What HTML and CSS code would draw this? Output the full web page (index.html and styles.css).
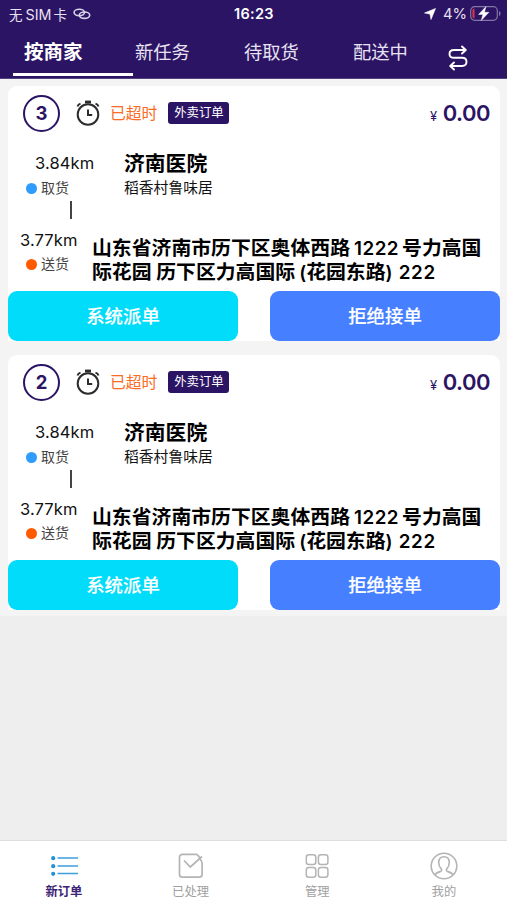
FILE: index.html
```html
<!DOCTYPE html>
<html lang="zh-CN">
<head>
<meta charset="utf-8">
<title>新订单</title>
<link rel="stylesheet" href="styles.css">
</head>
<body>
<svg width="0" height="0" class="defs">
  <symbol id="clock" viewBox="0 0 26 28">
    <g fill="none" stroke="#2c2c2c" stroke-width="2">
      <circle cx="13" cy="15.500" r="10.300"/>
      <path d="M13 10.500v5.500h4.200"/>
      <path d="M10 3h6" stroke-width="2.800"/>
      <path d="M2.500 7.500c.5-1.500 1.500-2.400 3-2.900M23.500 7.500c-.5-1.500-1.500-2.400-3-2.900"/>
    </g>
  </symbol>
</svg>
<header class="top">
  <div class="status">
    <div class="carrier"><span>无<i>SIM</i>卡</span>
      <svg width="18" height="12" viewBox="0 0 18 12" fill="none" stroke="#d9d3e8" stroke-width="1.600"><ellipse cx="6.300" cy="4.500" rx="5.200" ry="3.200"/><ellipse cx="11.500" cy="7.200" rx="5.200" ry="3.200"/></svg>
    </div>
    <div class="time">16:23</div>
    <div class="power">
      <svg width="12" height="12" viewBox="0 0 12 12" fill="#fff"><path d="M11.500.5L7 11.500 6 6 .5 5z" stroke="#fff" stroke-width=".6"/></svg>
      <span>4%</span>
      <svg width="31" height="15" viewBox="0 0 31 15"><rect x=".7" y=".7" width="26.600" height="13.600" rx="4" fill="none" stroke="#8176a5" stroke-width="1.200"/><path d="M4.500 2.500v10C3 12.500 2.400 11.600 2.400 10V5c0-1.600.6-2.500 2.100-2.500z" fill="#d8344a"/><path d="M29 5v5c1-.4 1.500-1.300 1.500-2.500S30 5.400 29 5z" fill="#8176a5"/><path d="M16 .5L8.500 8.500h4.300L11.200 14.500 19 6.300h-4.500z" fill="#fff" stroke="#fff" stroke-width=".4"/></svg>
    </div>
  </div>
  <nav class="tabs">
    <a class="tab active">按商家</a>
    <a class="tab">新任务</a>
    <a class="tab">待取货</a>
    <a class="tab">配送中</a>
    <svg class="swap" width="20" height="26" viewBox="0 0 20 26" fill="none" stroke="#fff" stroke-width="1.900" stroke-linecap="round" stroke-linejoin="round"><path d="M14 1.500L17.800 5 14 8.500M17.500 5H6C3 5 1.500 6.800 1.500 9s1.500 3.800 4.500 3.800h8c3 0 4.500 1.600 4.500 4s-1.500 4.200-4.500 4.200H2.500M6 17.500L2.200 21 6 24.500"/></svg>
  </nav>
</header>
<main class="list">
  <article class="card">
    <div class="head">
      <span class="num">3</span>
      <svg class="clock" width="26" height="28"><use href="#clock"/></svg>
      <span class="late">已超时</span>
      <span class="tag">外卖订单</span>
      <span class="price"><small>¥</small>0.00</span>
    </div>
    <div class="pickup">
      <div class="leg"><div class="km">3.84km</div><div class="kind">取货</div></div>
      <div class="shop"><h2>济南医院</h2><p>稻香村鲁味居</p></div>
    </div>
    <div class="line"></div>
    <div class="drop">
      <div class="leg"><div class="km">3.77km</div><div class="kind send">送货</div></div>
      <div class="address">山东省济南市历下区奥体西路<b class="house">1222</b>号力高国<br>际花园 历下区力高国际<b class="open">(</b>花园东路<b>) 222</b></div>
    </div>
    <div class="actions"><button class="assign">系统派单</button><button class="reject">拒绝接单</button></div>
  </article>
  <article class="card">
    <div class="head">
      <span class="num">2</span>
      <svg class="clock" width="26" height="28"><use href="#clock"/></svg>
      <span class="late">已超时</span>
      <span class="tag">外卖订单</span>
      <span class="price"><small>¥</small>0.00</span>
    </div>
    <div class="pickup">
      <div class="leg"><div class="km">3.84km</div><div class="kind">取货</div></div>
      <div class="shop"><h2>济南医院</h2><p>稻香村鲁味居</p></div>
    </div>
    <div class="line"></div>
    <div class="drop">
      <div class="leg"><div class="km">3.77km</div><div class="kind send">送货</div></div>
      <div class="address">山东省济南市历下区奥体西路<b class="house">1222</b>号力高国<br>际花园 历下区力高国际<b class="open">(</b>花园东路<b>) 222</b></div>
    </div>
    <div class="actions"><button class="assign">系统派单</button><button class="reject">拒绝接单</button></div>
  </article>
</main>
<footer class="bar">
  <a class="item on"><svg width="28" height="28" viewBox="0 0 28 28" stroke="#3c9fdc" stroke-width="1.700"><path d="M7.500 6H28M7.500 14H28M7.500 21.500H28"/><g fill="#2590d8" stroke="none"><circle cx="3.200" cy="6.200" r="2.100"/><circle cx="3.200" cy="14.200" r="2.100"/><circle cx="3.200" cy="21.800" r="2.100"/></g></svg>新订单</a>
  <a class="item"><svg width="28" height="28" viewBox="0 0 28 28" fill="none" stroke="#b4b4b4" stroke-width="1.700"><path d="M20 2.300H5.500a3 3 0 0 0-3 3v16.900a3 3 0 0 0 3 3h16.600a3 3 0 0 0 3-3V11.500c0-2-.8-3-2-4.500M20 2.300c1.300 1.200 2.400 2.600 3 4.200M7 8.500l6.300 6.500L25 4.500"/></svg>已处理</a>
  <a class="item"><svg width="28" height="28" viewBox="0 0 28 28" fill="none" stroke="#b4b4b4" stroke-width="1.500"><rect x="3.300" y="2.800" width="9.500" height="9.800" rx="2.500"/><rect x="15.400" y="2.800" width="9.500" height="9.800" rx="2.500"/><rect x="3.300" y="15.400" width="9.500" height="9.800" rx="2.500"/><rect x="15.400" y="15.400" width="9.500" height="9.800" rx="2.500"/></svg>管理</a>
  <a class="item"><svg width="28" height="28" viewBox="0 0 28 28" fill="none" stroke="#b4b4b4" stroke-width="1.600"><circle cx="14" cy="14" r="12.800"/><path d="M5 23c.5-2 3-2.700 5.500-3.500 1.400-.5 1.500-1.500.7-2.600C9.500 15 8.700 13 8.700 10.500c0-3.500 2-5.700 5.300-5.700s5.300 2.200 5.300 5.700c0 2.500-.8 4.500-2.500 6.400-.8 1.100-.7 2.100.7 2.600C20 20.300 22.500 21 23 23"/></svg>我的</a>
</footer>
</body>
</html>
```
FILE: styles.css
```css
* { box-sizing: border-box; }
body {
  margin: 0;
  width: 507px;
  height: 900px;
  display: flex;
  flex-direction: column;
  background: #eee;
  overflow: hidden;
  font-family: Inter, "Noto Sans CJK SC", sans-serif;
  color: #111;
  white-space: nowrap;
}
i { font-style: normal; }
.defs { position: absolute; }
.top { height: 79px; background: #2c1464; border-bottom: 1px solid #55437f; color: #fff; flex: none; }
.status { height: 28px; padding: 0 6px 0 9px; display: grid; grid-template-columns: 1fr auto 1fr; align-items: center; font-size: 14px; }
.carrier, .power { display: flex; align-items: center; color: #e6e1f0; }
.carrier { gap: 6px; margin-top: -1px; font-size: 13.500px; }
.carrier i { margin: 0 2px 0 3px; font-size: 14.300px; }
.time { font-size: 14.500px; font-weight: 600; letter-spacing: .3px; margin: -1px 2px 0 0; }
.power { justify-content: flex-end; gap: 3px; margin-top: -1px; }
.power span { font-size: 14.800px; margin-left: 4px; }
.tabs { height: 50px; display: flex; padding-left: 13px; font-size: 18.300px; line-height: 49px; }
.tab { width: 109px; padding-left: 13px; height: 48px; color: #e8e3f2; flex: none; }
.tab.active { width: 120px; padding-left: 11px; font-weight: 700; font-size: 19.500px; color: #fff; border-bottom: 3px solid #fff; margin-right: -11px; }
.swap { margin: 17px 0 0 -12px; }
.tab:nth-of-type(4) { width: 120px; }

.list { flex: 1; background: linear-gradient(#f4f4f4 537px, #eee 537px); padding-top: 7px; }
.card { height: 255px; margin: 0 7px 0 8px; background: #fff; border-radius: 9px 9px 0 0; }
.card + .card { margin-top: 14px; }
.head { height: 54px; padding: 0 10px 0 15px; display: flex; align-items: center; }
.num { width: 37px; height: 37px; border: 2px solid #2c1464; border-radius: 50%; font-size: 18.500px; font-weight: 700; line-height: 33px; text-align: center; color: #2c1464; }
.clock { margin-left: 15px; margin-top: -1px; }
.late { color: #fa6b26; font-size: 15.800px; margin: -2px 0 0 9px; }
.tag { width: 61px; height: 22px; margin-left: 11px; background: #2c1464; color: #fff; border-radius: 3px; font-size: 12.400px; line-height: 22px; text-align: center; }
.price { margin-left: auto; font-size: 22px; font-weight: 600; color: #2c1464; letter-spacing: -.5px; }
.price small { font-size: 13px; font-weight: 400; margin-right: 6px; }
.pickup { height: 61px; padding-top: 11px; display: flex; }
.pickup .leg { width: 116px; }
.km { font-size: 16.500px; line-height: 24px; letter-spacing: .1px; }
.pickup .km { padding-left: 27px; }
.kind { display: flex; align-items: center; gap: 4px; margin-left: 18px; font-size: 14px; line-height: 26px; color: #444; }
.kind::before { content: ""; width: 11px; height: 11px; border-radius: 50%; background: #2f9bfb; }
.kind.send::before { background: #ff5a00; }
.shop h2 { margin: 0; font-size: 20.800px; line-height: 25px; font-weight: 700; color: #000; }
.shop p { margin: 0; font-size: 14.800px; line-height: 25px; }
.line { width: 2px; height: 18px; margin-left: 62px; background: #444; }
.drop { height: 72px; padding-top: 10px; display: flex; }
.drop .leg { width: 84px; flex: none; }
.drop .km { padding-left: 12px; line-height: 23px; }
.drop .kind { line-height: 24px; }
.address { padding-top: 8px; font-size: 19.850px; font-weight: 700; line-height: 23.500px; color: #000; }
.address b { font-size: 18.800px; font-weight: 600; }
.address .house { margin: 0 3px 0 4px; letter-spacing: .5px; }
.address .open { margin-left: 4px; }
.address .open ~ b { letter-spacing: .7px; }
.actions { display: flex; justify-content: space-between; height: 50px; margin-top: -.5px; }
button { width: 230px; height: 50px; border: 0; border-radius: 9px; color: #fff; font: 500 18.400px Inter, "Noto Sans CJK SC", sans-serif; padding: 0 0 2px; -webkit-text-stroke: .15px #fff; }
.assign { background: #00dcfa; }
.reject { background: #467fff; }
.bar { height: 60px; flex: none; border-top: 1px solid #dedede; background: #fff; display: flex; }
.item { width: 126.700px; padding: 11px 0 0 1px; display: flex; flex-direction: column; align-items: center; font-size: 12.300px; line-height: 23px; color: #a0a0a0; }
.item svg { flex: none; }
.item.on { color: #3b2474; font-weight: 700; }
```
